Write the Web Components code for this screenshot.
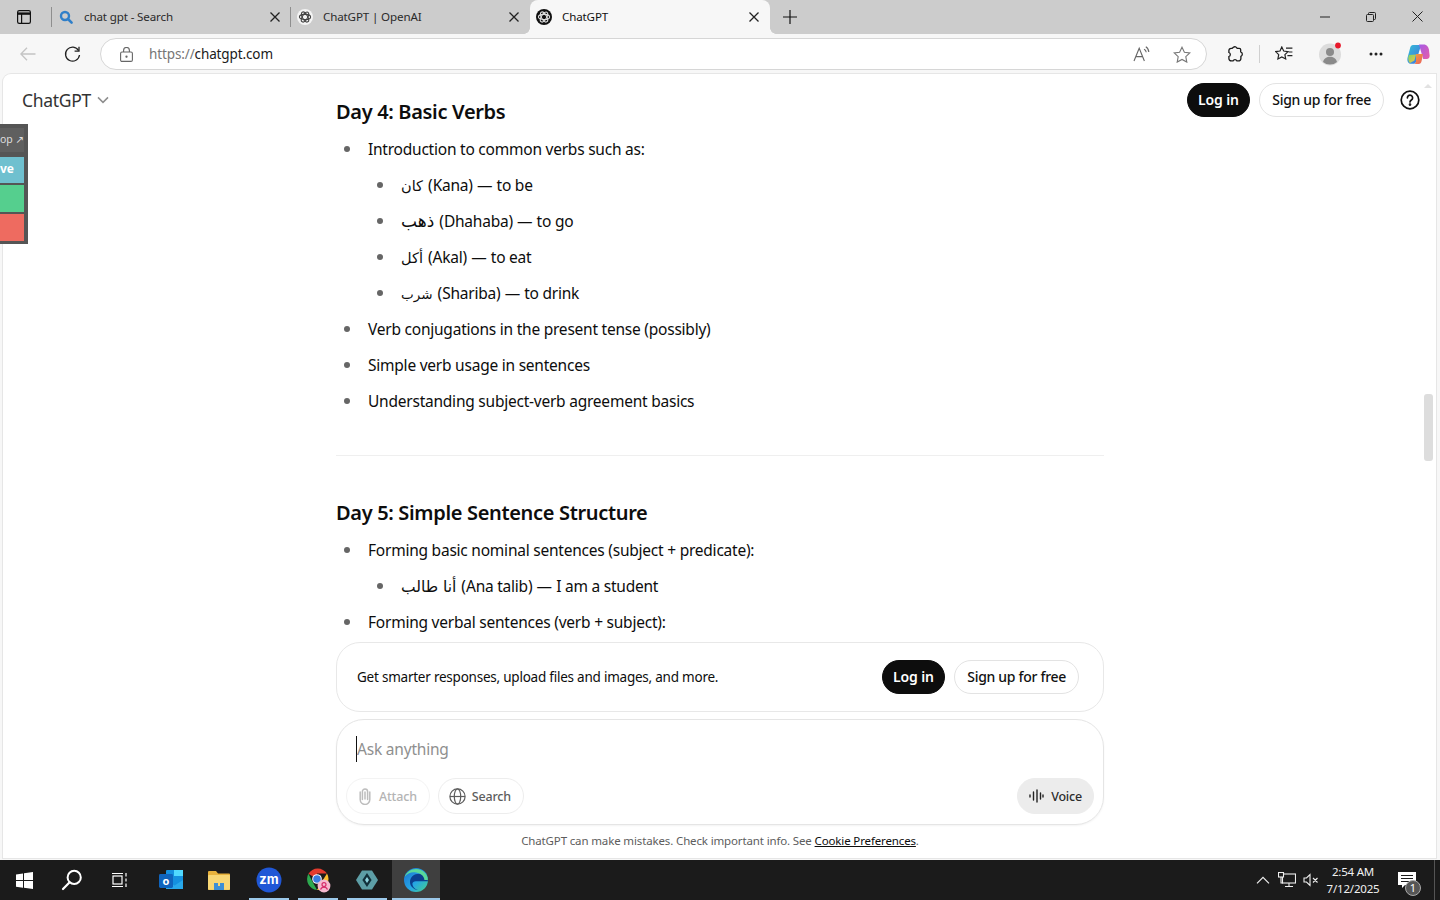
<!DOCTYPE html>
<html lang="en">
<head>
<meta charset="utf-8">
<title>ChatGPT</title>
<style>
  html, body { margin: 0; height: 100%; overflow: hidden; }
  body { font-family: "Noto Sans", "DejaVu Sans", sans-serif; background: #f7f7f7; color: #0d0d0d; }
</style>
</head>
<body>
<browser-window>
  <tab-strip slot="tabs">
    <window-tab label="chat gpt - Search" icon="search" divider></window-tab>
    <window-tab label="ChatGPT | OpenAI" icon="openai" divider></window-tab>
    <window-tab label="ChatGPT" icon="openai-dark" active></window-tab>
  </tab-strip>
  <address-bar slot="toolbar"></address-bar>
  <chat-page slot="page">
    <lesson-day title="Day 4: Basic Verbs">
      <ul>
        <li>Introduction to common verbs such as:
          <ul>
            <li><span dir="rtl">كان</span> (Kana) — to be</li>
            <li><span dir="rtl" style="font-size:17px">ذهب</span> (Dhahaba) — to go</li>
            <li><span dir="rtl">أكل</span> (Akal) — to eat</li>
            <li><span dir="rtl" style="font-size:13.5px">شرب</span> (Shariba) — to drink</li>
          </ul>
        </li>
        <li>Verb conjugations in the present tense (possibly)</li>
        <li>Simple verb usage in sentences</li>
        <li>Understanding subject-verb agreement basics</li>
      </ul>
    </lesson-day>
    <lesson-day title="Day 5: Simple Sentence Structure" nodivider>
      <ul>
        <li>Forming basic nominal sentences (subject + predicate):
          <ul>
            <li><span dir="rtl" style="font-size:15.5px">أنا طالب</span> (Ana talib) — I am a student</li>
          </ul>
        </li>
        <li>Forming verbal sentences (verb + subject):</li>
      </ul>
    </lesson-day>
  </chat-page>
  <task-bar slot="taskbar"></task-bar>
</browser-window>

<script>
const KNOT = (stroke) => `<g fill="none" stroke="${stroke}" stroke-width="1.1">
  <ellipse cx="8" cy="8" rx="5.6" ry="2.6"/>
  <ellipse cx="8" cy="8" rx="5.6" ry="2.6" transform="rotate(60 8 8)"/>
  <ellipse cx="8" cy="8" rx="5.6" ry="2.6" transform="rotate(120 8 8)"/>
</g>`;

const TAB_ICONS = {
  search: `<svg width="16" height="16" viewBox="0 0 16 16"><circle cx="7" cy="7" r="4" fill="none" stroke="#2f7fc9" stroke-width="2.4"/><path d="M10 10l3.6 3.6" stroke="#2f7fc9" stroke-width="2.6" stroke-linecap="round"/></svg>`,
  openai: `<svg width="16" height="16" viewBox="0 0 16 16"><circle cx="8" cy="8" r="8" fill="#f4f4f4"/>${KNOT('#444')}</svg>`,
  'openai-dark': `<svg width="16" height="16" viewBox="0 0 16 16"><circle cx="8" cy="8" r="8" fill="#111"/>${KNOT('#ddd')}</svg>`,
};

class BrowserWindow extends HTMLElement {
  constructor() {
    super();
    this.attachShadow({ mode: 'open' });
    this.shadowRoot.innerHTML = `
      <style>
        :host { display: flex; flex-direction: column; height: 900px; width: 1440px; }
        .page { flex: 1; min-height: 0; display: flex; padding: 0 4px 2px 3px; background: #f7f7f7; }
      </style>
      <slot name="tabs"></slot>
      <slot name="toolbar"></slot>
      <div class="page"><slot name="page"></slot></div>
      <slot name="taskbar"></slot>
    `;
  }
}

class TabStrip extends HTMLElement {
  constructor() {
    super();
    this.attachShadow({ mode: 'open' });
    this.shadowRoot.innerHTML = `
      <style>
        :host { display: flex; height: 34px; background: #cccccc; align-items: stretch; flex: none; }
        .side { width: 51px; flex: none; display: flex; align-items: center; padding: 0 0 1px 17px; box-sizing: border-box; }
        .plus { width: 40px; display: flex; align-items: center; padding-bottom: 1px; justify-content: center; }
        .fill { flex: 1; }
        .win { width: 46px; display: flex; align-items: center; padding-bottom: 1px; justify-content: center; }
      </style>
      <div class="side">
        <svg width="14" height="14" viewBox="0 0 14 14" fill="none" stroke="#111" stroke-width="1.2">
          <rect x=".6" y=".6" width="12.8" height="12.8" rx="1.6"/>
          <path d="M.6 3.6h12.8" stroke-width="2.4"/><path d="M4.6 3.6v9.8"/>
        </svg>
      </div>
      <slot></slot>
      <div class="plus">
        <svg width="14" height="14" viewBox="0 0 14 14"><path d="M7 0v14M0 7h14" stroke="#111" stroke-width="1.2"/></svg>
      </div>
      <div class="fill"></div>
      <div class="win"><svg width="10" height="10" viewBox="0 0 10 10"><path d="M0 5h10" stroke="#222"/></svg></div>
      <div class="win"><svg width="10" height="10" viewBox="0 0 10 10" fill="none" stroke="#222"><rect x=".5" y="2.5" width="7" height="7" rx="1"/><path d="M2.5 2.5V1.5a1 1 0 0 1 1-1h5a1 1 0 0 1 1 1v5a1 1 0 0 1-1 1h-1"/></svg></div>
      <div class="win"><svg width="11" height="11" viewBox="0 0 11 11"><path d="M.5.5l10 10M10.5.5l-10 10" stroke="#222"/></svg></div>
    `;
  }
}

class WindowTab extends HTMLElement {
  constructor() {
    super();
    this.attachShadow({ mode: 'open' });
  }

  connectedCallback() {
    const label = this.getAttribute('label');
    const icon = TAB_ICONS[this.getAttribute('icon')];
    this.shadowRoot.innerHTML = `
      <style>
        :host { display: flex; align-items: center; width: 239px; box-sizing: border-box; padding: 0 7px 1px 6px; font-size: 11.6px; color: #2a2a2a; position: relative; }
        :host([divider]) { border-left: 1px solid #8e8e8e; border-image: linear-gradient(#ccc 8px, #8e8e8e 8px, #8e8e8e 26px, #ccc 26px) 1; }
        :host([active]) { background: #f7f7f7; border-radius: 8px 8px 0 0; width: 240px; margin-left: 1px; color: #111; padding-right: 8px; }
        :host([active])::before, :host([active])::after { content: ""; position: absolute; bottom: 0; width: 6px; height: 6px; }
        :host([active])::before { left: -6px; background: radial-gradient(circle at 0 0, transparent 5.5px, #f7f7f7 6px); }
        :host([active])::after { right: -6px; background: radial-gradient(circle at 100% 0, transparent 5.5px, #f7f7f7 6px); }
        svg.fav { flex: none; margin-right: 10px; }
        .t { flex: 1; white-space: nowrap; overflow: hidden; letter-spacing: -.14px; }
      </style>
      ${icon.replace('<svg', '<svg class="fav"')}
      <span class="t">${label}</span>
      <svg width="10" height="10" viewBox="0 0 10 10" style="margin-right:3px"><path d="M.5.5l9 9M9.5.5l-9 9" stroke="#222" stroke-width="1.3"/></svg>
    `;
  }
}

class AddressBar extends HTMLElement {
  constructor() {
    super();
    this.attachShadow({ mode: 'open' });
    this.shadowRoot.innerHTML = `
      <style>
        :host { display: flex; height: 40px; flex: none; background: #f7f7f7; align-items: flex-start; padding-top: 4px; box-sizing: border-box; }
        .nav { height: 32px; display: flex; align-items: center; justify-content: center; flex: none; }
        .lead { width: 12px; flex: none; }
        .bar { width: 1107px; height: 32px; box-sizing: border-box; background: #fff; border: 1px solid #d6d6d6; border-radius: 16px; display: flex; align-items: center; padding: 0 15px 0 19px; flex: none; }
        .url { font-size: 13.5px; margin-left: 16px; color: #767676; flex: 1; letter-spacing: -.12px; }
        .url b { font-weight: 400; color: #1a1a1a; }
        .bar svg + svg { margin-left: 22px; }
        .tools { display: flex; align-items: center; height: 32px; flex: 1; }
        .tool { display: flex; align-items: center; justify-content: center; height: 32px; flex: none; box-sizing: border-box; }
        .sep { width: 1px; height: 18px; background: #d0d0d0; flex: none; }
      </style>
      <div class="lead"></div>
      <div class="nav" style="width:32px"><svg width="16" height="14" viewBox="0 0 16 14" fill="none" stroke="#c4c4c4" stroke-width="1.3"><path d="M15.5 7H1M7 .8L.9 7 7 13.2"/></svg></div>
      <div class="nav" style="width:56px"><svg width="17" height="17" viewBox="0 0 17 17" fill="none" stroke="#222" stroke-width="1.3"><path d="M14.6 4.6A7 7 0 1 0 15.5 9"/><path d="M15 .8v4.4h-4.4"/></svg></div>
      <div class="bar">
        <svg width="13" height="15" viewBox="0 0 13 15" fill="none" stroke="#666" stroke-width="1.1"><rect x=".6" y="5" width="11.8" height="9.4" rx="1.4"/><path d="M3.6 5V3.4a2.9 2.9 0 0 1 5.8 0V5"/><circle cx="6.5" cy="9.7" r=".6" fill="#666"/></svg>
        <span class="url">https://<b>chatgpt.com</b></span>
        <svg width="18" height="16" viewBox="0 0 18 16" fill="none" stroke="#666" stroke-width="1.1"><path d="M1 15L6.2 2.2 11.4 15M2.9 10.6h6.6"/><path d="M11 3.2a3.6 3.6 0 0 1 2.2 3M12.8.8a6.4 6.4 0 0 1 3 5.2"/></svg>
        <svg width="18" height="17" viewBox="0 0 18 17" fill="none" stroke="#777" stroke-width="1.1"><path d="M9 1.2l2.4 5 5.4.7-4 3.8 1 5.4L9 13.5l-4.8 2.6 1-5.4-4-3.8 5.4-.7z"/></svg>
      </div>
      <div class="tools">
        <div class="tool" style="width:52px;padding-left:5px">
          <svg width="17" height="17" viewBox="0 0 17 17" fill="none" stroke="#1a1a1a" stroke-width="1.3"><path d="M6.4 1.3c1.3-1 3.1-.5 3.7 1h2.1a1.5 1.5 0 0 1 1.5 1.5v2.100c1.900.7 2.300 3.500.2 4.500v2.100a2.400 2.400 0 0 1-2.400 2.400H9.900c-.6-1.800-3.200-1.800-3.800 0H4.300a2.400 2.400 0 0 1-2.400-2.400v-2c1.900-.6 1.900-3.400 0-4V4.600c0-1.300 1-2.300 2.300-2.300h1z"/></svg>
        </div>
        <div class="sep"></div>
        <div class="tool" style="width:48px">
          <svg width="18" height="16" viewBox="0 0 18 16" fill="none" stroke="#222" stroke-width="1.2"><path d="M6.8 1l1.900 4 4.300.6-3.100 3 .8 4.400-3.900-2.100-3.900 2.100.8-4.400-3.100-3L5 5z"/><path d="M11 2.200h6.400M13.600 6h3.800M12.400 9.600h5"/></svg>
        </div>
        <div class="tool" style="width:44px">
          <svg width="24" height="24" viewBox="0 0 24 24"><circle cx="12" cy="12.5" r="11" fill="#dcdcdc"/><circle cx="12" cy="10" r="4" fill="#8a8a8a"/><path d="M5 20c1-3.800 3.800-5.300 7-5.300s6 1.500 7 5.300a11 11 0 0 1-14 0z" fill="#8a8a8a"/><circle cx="20" cy="3.5" r="2.9" fill="#e8192c"/></svg>
        </div>
        <div class="tool" style="width:48px"><svg width="14" height="4" viewBox="0 0 14 4" fill="#222"><circle cx="2" cy="2" r="1.5"/><circle cx="7" cy="2" r="1.5"/><circle cx="12" cy="2" r="1.5"/></svg></div>
        <div class="tool" style="width:36px">
          <svg width="24" height="24" viewBox="0 0 24 24">
            <defs>
              <linearGradient id="c1" x1="0" y1="0" x2="1" y2="1"><stop offset="0" stop-color="#35c0d6"/><stop offset="1" stop-color="#3e6fe0"/></linearGradient>
              <linearGradient id="c2" x1="0" y1="0" x2="1" y2="1"><stop offset="0" stop-color="#a25be8"/><stop offset="1" stop-color="#e85ca8"/></linearGradient>
              <linearGradient id="c3" x1="0" y1="0" x2="1" y2="1"><stop offset="0" stop-color="#7fd36a"/><stop offset="1" stop-color="#f5c542"/></linearGradient>
              <linearGradient id="c4" x1="0" y1="0" x2="1" y2="1"><stop offset="0" stop-color="#f0a03c"/><stop offset="1" stop-color="#ec5f5f"/></linearGradient>
            </defs>
            <path d="M7 3h6c1.400 0 1.800 1 1.400 2.200L10 20c-.4 1.200-1.200 1.800-2.600 1.800H5.600C2 21.800.8 18.800 1.600 15.400L4 6.400C4.400 4.400 5.400 3 7 3z" fill="url(#c1)"/>
            <path d="M13 2.400h4.600c3.200 0 5 2.600 5.400 5.600l.6 5.600c.2 2-1 3.400-2.800 3.400h-3.600z" fill="url(#c2)"/>
            <path d="M3 13l7-.6-1.600 6-4.400 2.600C1.800 19 2 15 3 13z" fill="url(#c3)"/>
            <path d="M10 12h7l-1.400 7c-.4 2-1.400 3-3 3H7.800c1 0 1.800-1 2.200-2.600z" fill="url(#c4)"/>
          </svg>
        </div>
      </div>
    `;
  }
}

class ChatPage extends HTMLElement {
  constructor() {
    super();
    this.attachShadow({ mode: 'open' });
    this.shadowRoot.innerHTML = `
      <style>
        :host { display: flex; flex-direction: column; flex: 1; min-width: 0; position: relative; background: #fff; border-radius: 8px 0 0 0; box-shadow: 0 0 0 1px #e6e6e6; padding-left: 1px; }
        .scroll { flex: 1; min-height: 0; overflow: hidden; border-radius: 8px 0 0 0; }
        .col { width: 768px; margin: 0 auto; padding-top: 23px; }
        .thumb { position: absolute; top: 320px; right: 3px; width: 9px; height: 67px; border-radius: 3px; background: #dddddd; }
        .arrow { position: absolute; top: 10px; right: 4px; width: 0; height: 0; border: 4px solid transparent; border-top: 0; border-bottom: 4px solid #e2e2e2; }
      </style>
      <chat-header></chat-header>
      <side-widget></side-widget>
      <div class="scroll"><div class="col"><slot></slot></div></div>
      <bottom-dock></bottom-dock>
      <div class="arrow"></div>
      <div class="thumb"></div>
    `;
  }
}

class ChatHeader extends HTMLElement {
  constructor() {
    super();
    this.attachShadow({ mode: 'open' });
    this.shadowRoot.innerHTML = `
      <style>
        :host { position: absolute; top: 9px; left: 0; right: 0; height: 34px; display: flex; align-items: center; padding: 0 16px 0 19px; gap: 9px; z-index: 1; }
        .brand { font-size: 17.5px; color: #333; display: flex; align-items: center; gap: 6px; letter-spacing: -.3px; }
        .fill { flex: 1; }
        svg.help { margin-left: 7px; }
      </style>
      <div class="brand">ChatGPT
        <svg width="12" height="8" viewBox="0 0 12 8" fill="none" stroke="#8e8e8e" stroke-width="1.5"><path d="M1 1.4l5 5 5-5"/></svg>
      </div>
      <div class="fill"></div>
      <pill-button kind="dark">Log in</pill-button>
      <pill-button>Sign up for free</pill-button>
      <svg class="help" width="20" height="20" viewBox="0 0 20 20" fill="none" stroke="#111" stroke-width="1.7"><circle cx="10" cy="10" r="8.8"/><path d="M7.4 7.8A2.6 2.6 0 1 1 11.4 10c-.9.6-1.4 1-1.4 2" stroke-linecap="round"/><circle cx="10" cy="14.6" r=".5" fill="#111"/></svg>
    `;
  }
}

class PillButton extends HTMLElement {
  constructor() {
    super();
    this.attachShadow({ mode: 'open' });
    this.shadowRoot.innerHTML = `
      <style>
        :host { display: inline-flex; align-items: center; height: 34px; padding: 0 12px 1px; box-sizing: border-box; border: 1px solid #e3e3e3; border-radius: 17px; background: #fff; font-size: 14px; font-weight: 500; color: #111; white-space: nowrap; letter-spacing: -.3px; }
        :host([kind="dark"]) { background: #0d0d0d; border-color: #0d0d0d; color: #fff; font-weight: 600; padding: 0 10.5px 1px; letter-spacing: -.15px; }
      </style>
      <slot></slot>
    `;
  }
}

class SideWidget extends HTMLElement {
  constructor() {
    super();
    this.attachShadow({ mode: 'open' });
    this.shadowRoot.innerHTML = `
      <style>
        :host { position: absolute; top: 50px; left: -3px; width: 28px; height: 120px; box-sizing: border-box; background: #555; padding: 4px 4px 3px 0; display: flex; flex-direction: column; gap: 2px; font-size: 11px; font-weight: 700; color: #fff; z-index: 1; }
        div { display: flex; align-items: center; white-space: nowrap; padding-bottom: 2px; box-sizing: border-box; }
        .a { height: 24px; background: #5f5f5f; color: #ddd; font-weight: 400; margin-bottom: 3px; font-size: 10.5px; }
        .b { height: 27px; background: #6fc0cf; font-size: 12px; }
        .c { height: 27px; background: #55cf8e; }
        .d { height: 28px; background: #ee6b60; }
      </style>
      <div class="a">op ↗</div>
      <div class="b">ve</div>
      <div class="c"></div>
      <div class="d"></div>
    `;
  }
}

class LessonDay extends HTMLElement {
  constructor() {
    super();
    this.attachShadow({ mode: 'open' });
  }

  connectedCallback() {
    const title = this.getAttribute('title');
    const list = this.innerHTML;
    const noDivider = this.hasAttribute('nodivider');
    this.shadowRoot.innerHTML = `
      <style>
        :host { display: block; font-size: 15.5px; color: #0d0d0d; letter-spacing: -.23px; }
        h3 { margin: 0 0 8px; font-size: 20px; line-height: 30px; font-weight: 600; color: #0d0d0d; letter-spacing: -.33px; }
        ul { margin: 0; padding: 0 0 0 32px; list-style: none; }
        ul ul { margin-top: 8px; margin-bottom: -8px; padding-left: 33px; }
        li { line-height: 28px; padding-bottom: 8px; position: relative; }
        li::before { content: ""; position: absolute; left: -24px; top: 11px; width: 6px; height: 6px; border-radius: 50%; background: #666; }
        hr { border: 0; border-top: 1px solid #efefef; margin: 32px 0 42px; }
        span { font-family: "DejaVu Sans", "Noto Sans", sans-serif; font-size: 14.5px; letter-spacing: 0; line-height: 0; margin-right: 1px; }
      </style>
      <h3>${title}</h3>
      ${list}
      ${noDivider ? '' : '<hr>'}
    `;
  }
}

class BottomDock extends HTMLElement {
  constructor() {
    super();
    this.attachShadow({ mode: 'open' });
    this.shadowRoot.innerHTML = `
      <style>
        :host { display: block; flex: none; height: 216px; background: #fff; box-sizing: border-box; position: relative; }
        .col { width: 768px; margin: 0 auto; display: flex; flex-direction: column; gap: 7px; }
        .foot { text-align: center; font-size: 11.5px; color: #5d5d5d; line-height: 16px; padding-top: 8px; letter-spacing: -.14px; }
        .foot a { color: #0d0d0d; text-decoration: underline; }
      </style>
      <div class="col">
        <upsell-banner></upsell-banner>
        <chat-composer></chat-composer>
      </div>
      <div class="foot">ChatGPT can make mistakes. Check important info. See <a>Cookie Preferences</a>.</div>
    `;
  }
}

class UpsellBanner extends HTMLElement {
  constructor() {
    super();
    this.attachShadow({ mode: 'open' });
    this.shadowRoot.innerHTML = `
      <style>
        :host { display: flex; align-items: center; height: 70px; box-sizing: border-box; border: 1px solid #e8e8e8; border-radius: 24px; padding: 0 24px 1px 20px; gap: 9px; font-size: 13.5px; color: #0d0d0d; letter-spacing: -.23px; }
        .msg { flex: 1; }
      </style>
      <span class="msg">Get smarter responses, upload files and images, and more.</span>
      <pill-button kind="dark">Log in</pill-button>
      <pill-button>Sign up for free</pill-button>
    `;
  }
}

class ChatComposer extends HTMLElement {
  constructor() {
    super();
    this.attachShadow({ mode: 'open' });
    this.shadowRoot.innerHTML = `
      <style>
        :host { display: flex; flex-direction: column; height: 106px; box-sizing: border-box; border: 1px solid #e5e5e5; border-radius: 28px; padding: 16px 9px 10px 9px; box-shadow: 0 1px 2px rgba(0,0,0,.05); }
        .input { height: 26px; margin-left: 10px; font-size: 15.5px; color: #8f8f8f; line-height: 26px; border-left: 1px solid #111; letter-spacing: -.2px; width: max-content; }
        .row { flex: 1; display: flex; align-items: flex-end; gap: 8px; }
        .fill { flex: 1; }
        .chip { display: flex; align-items: center; gap: 6px; height: 36px; box-sizing: border-box; padding: 0 12px 0 10px; border: 1px solid #ededed; border-radius: 18px; font-size: 12.5px; font-weight: 500; color: #5d5d5d; letter-spacing: -.18px; }
        .chip.off { color: #b4b4b4; border-color: #f3f3f3; }
        .chip.voice { background: #ececec; border-color: #ececec; color: #2d2d2d; gap: 7px; padding: 0 11px; }
      </style>
      <div class="input">Ask anything</div>
      <div class="row">
        <div class="chip off">
          <svg width="16" height="18" viewBox="0 0 16 18" fill="none" stroke="#bdbdbd" stroke-width="1.5" stroke-linecap="round"><path d="M8 5v7M5.4 12.4V4.6a2.6 2.6 0 0 1 5.2 0v8"/><path d="M3.2 5v7.600a4.800 4.800 0 0 0 9.600 0V5"/></svg>
          Attach
        </div>
        <div class="chip">
          <svg width="17" height="17" viewBox="0 0 17 17" fill="none" stroke="#5d5d5d" stroke-width="1.2"><circle cx="8.5" cy="8.5" r="7.6"/><ellipse cx="8.5" cy="8.5" rx="3.2" ry="7.6"/><path d="M1 8.5h15"/></svg>
          Search
        </div>
        <div class="fill"></div>
        <div class="chip voice">
          <svg width="15" height="14" viewBox="0 0 15 14" stroke="#222" stroke-width="1.4" stroke-linecap="round"><path d="M1 6v2M4.5 3v8M8 1v12M11.5 4v6M14 6v2"/></svg>
          Voice
        </div>
      </div>
    `;
  }
}

class TaskBar extends HTMLElement {
  constructor() {
    super();
    this.attachShadow({ mode: 'open' });
    this.shadowRoot.innerHTML = `
      <style>
        :host { display: flex; height: 40px; flex: none; background: #1b1b1b; align-items: stretch; color: #f0f0f0; }
        .slot { width: 48px; display: flex; align-items: center; justify-content: center; flex: none; box-sizing: border-box; position: relative; }
        .run::after { content: ""; position: absolute; left: 4px; right: 4px; bottom: 0; height: 2px; background: #9cc9ea; }
        .cur { background: #3f3f3f; margin-left: 1px; }
        .cur::after { left: 0; right: 0; }
        .fill { flex: 1; }
        .tray { width: 24px; display: flex; align-items: center; justify-content: center; flex: none; }
        .clock { width: 54px; margin-left: 3px; display: flex; flex-direction: column; align-items: center; justify-content: center; font-size: 11.5px; line-height: 17px; letter-spacing: -.2px; flex: none; white-space: nowrap; padding-bottom: 1px; box-sizing: border-box; }
        .note { width: 54px; display: flex; align-items: center; justify-content: center; position: relative; flex: none; }
        .count { position: absolute; right: 13px; bottom: 4px; width: 16px; height: 16px; border-radius: 50%; background: #555; border: 1px solid #aaa; box-sizing: border-box; font-size: 11px; line-height: 14px; text-align: center; color: #fff; }
        .edge { width: 5px; border-left: 1px solid #555; flex: none; }
      </style>
      <div class="slot">
        <svg width="17" height="17" viewBox="0 0 17 17" fill="#fff"><path d="M0 2.4L7 1.4v6.7H0zM8 1.3L17 0v8.1H8zM0 9h7v6.7l-7-1zM8 9h9v8l-9-1.3z"/></svg>
      </div>
      <div class="slot">
        <svg width="24" height="24" viewBox="0 0 24 24" fill="none" stroke="#fff" stroke-width="2"><circle cx="14.2" cy="9.4" r="6.6"/><path d="M9.4 14.4L3 21" stroke-linecap="round" stroke-width="2.2"/></svg>
      </div>
      <div class="slot">
        <svg width="18" height="16" viewBox="0 0 18 16" fill="none" stroke="#fff" stroke-width="1.2"><rect x="2" y="4" width="9" height="8"/><path d="M1 1.5h11M1 14.5h11M15 1v3.6M15 6.5v3M15 11.5v3.5"/></svg>
      </div>
      <div class="slot" style="margin-left:3px">
        <svg width="26" height="24" viewBox="0 0 26 24"><rect x="8" y="2" width="17" height="19" rx="1" fill="#1490df"/><path d="M8 12l8.5 5.5L25 12v9H8z" fill="#28a8ea"/><rect x="16" y="2" width="9" height="6" fill="#50d9ff"/><rect x="1" y="6" width="14" height="14" rx="1.4" fill="#0f64bd"/><text x="8" y="17" font-size="11" font-weight="700" text-anchor="middle" fill="#fff" font-family="Noto Sans, sans-serif">o</text></svg>
      </div>
      <div class="slot">
        <svg width="24" height="22" viewBox="0 0 24 22"><path d="M1 3a1 1 0 0 1 1-1h7l2 2.4h11a1 1 0 0 1 1 1V20a1 1 0 0 1-1 1H2a1 1 0 0 1-1-1z" fill="#e8b23c"/><rect x="1" y="6" width="22" height="14.8" rx=".8" fill="#f8d775"/><path d="M7 21v-7h4v3h2v-3h4v7z" fill="#3d8fd6"/></svg>
      </div>
      <div class="slot run" style="margin-left:2px">
        <svg width="26" height="26" viewBox="0 0 26 26"><circle cx="13" cy="13" r="12.5" fill="#2057d6"/><text x="13" y="17.4" font-size="13" font-weight="700" text-anchor="middle" fill="#fff" font-family="Inter, sans-serif">zm</text></svg>
      </div>
      <div class="slot run" style="margin-left:1px">
        <svg width="26" height="26" viewBox="0 0 26 26">
          <path d="M12 12L3.4 6.800A11 11 0 0 1 22 6.600H12z" fill="#e33b2e"/>
          <path d="M12 23L7 13.800 3.400 6.800A11 11 0 0 0 12 23z" fill="#2da94f"/>
          <path d="M22 6.600A11 11 0 0 1 12 23l5-8.500z" fill="#fbc02d"/>
          <circle cx="12" cy="12" r="4.8" fill="#fff"/><circle cx="12" cy="12" r="3.8" fill="#3a7de0"/>
          <circle cx="19" cy="19" r="6.4" fill="#f6b9cf"/><circle cx="19" cy="17.6" r="2" fill="none" stroke="#d62c6a" stroke-width="1.2"/><path d="M15.6 22.6a3.6 3.6 0 0 1 6.8 0" fill="none" stroke="#d62c6a" stroke-width="1.2"/>
        </svg>
      </div>
      <div class="slot run" style="margin-left:1px">
        <svg width="24" height="24" viewBox="0 0 24 24"><path d="M7 2.4h10L23 12l-6 9.600H7L1 12z" fill="#5d9ea6"/><path d="M12 5l4.600 7L12 19l-4.600-7z" fill="#12303a"/><path d="M12 9l2 3-2 3-2-3z" fill="#8fd3de"/></svg>
      </div>
      <div class="slot run cur">
        <svg width="26" height="26" viewBox="0 0 26 26">
          <defs><linearGradient id="eg" x1="0" y1="0" x2="1" y2="1"><stop offset="0" stop-color="#1a6fd0"/><stop offset=".55" stop-color="#26a5e4"/><stop offset="1" stop-color="#46d18a"/></linearGradient></defs>
          <circle cx="13" cy="13" r="12" fill="url(#eg)"/>
          <path d="M25 14.2c0-4.600-4-7.400-8.600-7.400-5.600 0-9.400 3.400-9.400 8.200 0 4 3.400 7.600 8 8-3.600-.8-5.600-3.600-5.600-6.400 0-1.400 1.400-2.400 3.400-2.400h12.200z" fill="#0b3f8f"/>
          <path d="M25 14c0-6.600-5.400-12-12-12C7.800 2 3.200 5.400 1.600 10c2-3 5.400-4.800 9.400-4.800 6 0 10.400 3.800 10.400 7.800H25z" fill="#59d99a"/>
        </svg>
      </div>
      <div class="fill"></div>
      <div class="tray"><svg width="14" height="8" viewBox="0 0 14 8" fill="none" stroke="#eee" stroke-width="1.2"><path d="M1 7.4l6-6 6 6"/></svg></div>
      <div class="tray"><svg width="18" height="16" viewBox="0 0 18 16" fill="none" stroke="#eee" stroke-width="1.1"><rect x="4.5" y="2" width="13" height="9"/><path d="M11 11v3M7 14.5h8"/><rect x=".5" y=".5" width="5" height="4.5" fill="#1b1b1b"/><path d="M3 5v6h2"/></svg></div>
      <div class="tray"><svg width="16" height="14" viewBox="0 0 16 14" fill="none" stroke="#eee" stroke-width="1.1"><path d="M1 5v4h2.5L7 12.5V1.5L3.5 5zM10 5l4.5 4.5M14.500 5L10 9.500"/></svg></div>
      <div class="clock"><span>2:54 AM</span><span>7/12/2025</span></div>
      <div class="note">
        <svg width="20" height="18" viewBox="0 0 20 18" fill="#fff"><path d="M1 1h18v13H8l-3 3v-3H1z"/><path d="M4 4.5h12M4 7.5h12M4 10.5h8" stroke="#1b1b1b"/></svg>
        <span class="count">1</span>
      </div>
      <div class="edge"></div>
    `;
  }
}

customElements.define('browser-window', BrowserWindow);
customElements.define('tab-strip', TabStrip);
customElements.define('window-tab', WindowTab);
customElements.define('address-bar', AddressBar);
customElements.define('chat-page', ChatPage);
customElements.define('chat-header', ChatHeader);
customElements.define('pill-button', PillButton);
customElements.define('side-widget', SideWidget);
customElements.define('lesson-day', LessonDay);
customElements.define('bottom-dock', BottomDock);
customElements.define('upsell-banner', UpsellBanner);
customElements.define('chat-composer', ChatComposer);
customElements.define('task-bar', TaskBar);
</script>
</body>
</html>
